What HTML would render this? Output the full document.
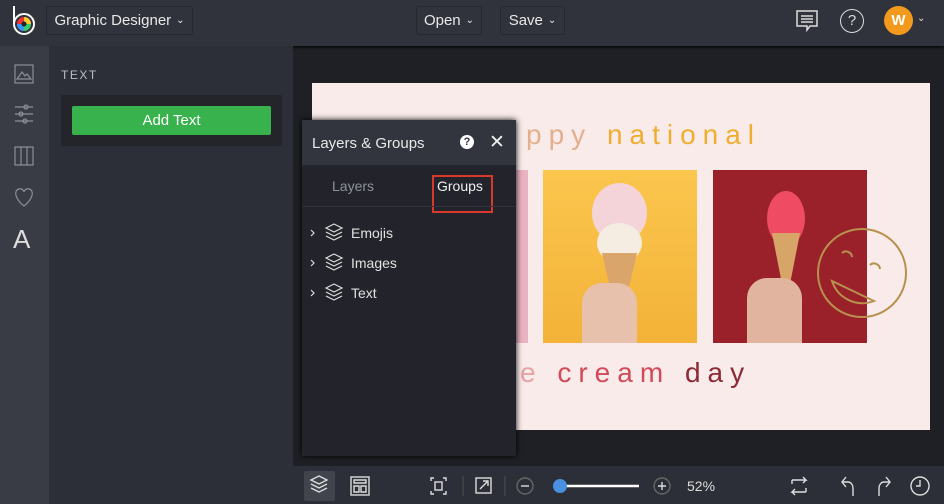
<!DOCTYPE html>
<html><head><style>
*{margin:0;padding:0;box-sizing:border-box}
body{width:944px;height:504px;overflow:hidden;background:#1e2025;font-family:"Liberation Sans",sans-serif;position:relative;color:#e6e6e6}
.abs{position:absolute}
.btn{position:absolute;border:1px solid #262830;border-radius:3px;font-size:15px;color:#e8e8e8;display:flex;align-items:center;justify-content:center}
</style></head><body>
<!-- top bar -->
<div class="abs" style="left:0;top:0;width:944px;height:46px;background:#30333b;box-shadow:0 1px 3px #000"></div>
<svg class="abs" style="left:10px;top:4px" width="28" height="32" viewBox="0 0 28 32">
<circle cx="14" cy="20" r="10" fill="none" stroke="#fff" stroke-width="2"/>
<line x1="4" y1="2" x2="4" y2="20" stroke="#fff" stroke-width="2"/>
<circle cx="14" cy="20" r="7" fill="#e33"/>
<path d="M14 20 L14 13 A7 7 0 0 1 21 20Z" fill="#fc3"/>
<path d="M14 20 L21 20 A7 7 0 0 1 14 27Z" fill="#3c6"/>
<path d="M14 20 L14 27 A7 7 0 0 1 7 20Z" fill="#39f"/>
<circle cx="14" cy="20" r="2.5" fill="#222"/>
</svg>
<div class="btn" style="left:46px;top:6px;width:147px;height:29px">Graphic Designer <span style="font-size:10px;margin-left:5px">&#8964;</span></div>
<div class="btn" style="left:416px;top:6px;width:66px;height:29px">Open <span style="font-size:10px;margin-left:5px">&#8964;</span></div>
<div class="btn" style="left:500px;top:6px;width:65px;height:29px">Save <span style="font-size:10px;margin-left:5px">&#8964;</span></div>
<svg class="abs" style="left:795px;top:9px" width="24" height="24" viewBox="0 0 24 24" fill="none" stroke="#ddd" stroke-width="1.5"><path d="M2 2h20v15H15l-3 4v-4H2z"/><path d="M6 7h12M6 10h12M6 13h12"/></svg>
<div class="abs" style="left:840px;top:9px;width:24px;height:24px;border:1.5px solid #ddd;border-radius:50%;font-size:15px;text-align:center;line-height:21px;color:#ddd">?</div>
<div class="abs" style="left:884px;top:6px;width:29px;height:29px;border-radius:50%;background:#f39a1e;color:#fff;font-weight:bold;font-size:15px;text-align:center;line-height:29px">W</div>
<div class="abs" style="left:917px;top:13px;font-size:10px;color:#ddd">&#8964;</div>
<!-- left rail -->
<div class="abs" style="left:0;top:46px;width:49px;height:458px;background:#393c45"></div>
<svg class="abs" style="left:13px;top:63px" width="22" height="200" viewBox="0 0 22 200" fill="none" stroke="#8a8e98" stroke-width="1.2">
<rect x="2" y="2" width="18" height="18"/><path d="M4 16l5-7 3 4 2-2 4 5z"/>
<path d="M2 44h18M2 51h18M2 58h18"/><circle cx="13" cy="44" r="2"/><circle cx="8" cy="51" r="2"/><circle cx="12" cy="58" r="2"/>
<rect x="2" y="84" width="18" height="18"/><path d="M8 84v18M14 84v18"/>
<path d="M11 143 C1 135 1 127 6 126 C9 125 11 128 11 129 C11 128 13 125 16 126 C21 127 21 135 11 143z"/>
</svg>
<div class="abs" style="left:13px;top:224px;font-size:26px;color:#ddd;font-weight:300">A</div>
<!-- side panel -->
<div class="abs" style="left:49px;top:46px;width:244px;height:458px;background:#2c2f37"></div>
<div class="abs" style="left:61px;top:68px;font-size:12px;letter-spacing:1.5px;color:#b8bcc4">TEXT</div>
<div class="abs" style="left:61px;top:95px;width:221px;height:51px;background:#23252b"></div>
<div class="abs" style="left:72px;top:106px;width:199px;height:29px;background:#37b24d;border-radius:2px;color:#fff;font-size:15px;text-align:center;line-height:29px">Add Text</div>
<!-- canvas -->
<div class="abs" style="left:312px;top:83px;width:618px;height:347px;background:#f9ebea;overflow:hidden">
<div class="abs" style="left:204px;top:87px;width:12px;height:173px;background:#eab3c4"></div>
<div class="abs" style="left:231px;top:87px;width:154px;height:173px;background:linear-gradient(#fbc64e,#f3b238)"></div>
<div class="abs" style="left:280px;top:100px;width:55px;height:60px;border-radius:50%;background:#f4d4d8"></div>
<div class="abs" style="left:285px;top:140px;width:45px;height:40px;border-radius:50%;background:#f5ece2"></div>
<div class="abs" style="left:290px;top:170px;width:35px;height:60px;background:#d9a56b;clip-path:polygon(0 0,100% 0,60% 100%,40% 100%)"></div>
<div class="abs" style="left:270px;top:200px;width:55px;height:60px;border-radius:20px 20px 0 0;background:#e8c1ad"></div>
<div class="abs" style="left:401px;top:87px;width:154px;height:173px;background:#9a2129"></div>
<div class="abs" style="left:455px;top:108px;width:38px;height:55px;border-radius:50%;background:#ef4c63"></div>
<div class="abs" style="left:460px;top:150px;width:28px;height:50px;background:#d7a567;clip-path:polygon(0 0,100% 0,65% 100%,35% 100%)"></div>
<div class="abs" style="left:435px;top:195px;width:55px;height:65px;border-radius:20px 20px 0 0;background:#e1b49f"></div>
<svg class="abs" style="left:500px;top:140px" width="100" height="100" viewBox="0 0 100 100" fill="none" stroke="#b7924e" stroke-width="2"><circle cx="50" cy="50" r="44"/><path d="M20 58 A32 32 0 0 0 62 78 Z"/><path d="M30 30a6 6 0 0 1 10 4M58 42a6 6 0 0 1 10 4"/></svg>
<div class="abs" style="left:214px;top:36px;font-size:28px;letter-spacing:7px;color:#e2b08d">ppy <span style="color:#efae2e">national</span></div>
<div class="abs" style="left:208px;top:274px;font-size:28px;letter-spacing:7px;color:#e8a3a3">e <span style="color:#d24a59">cream</span> <span style="color:#8c2a36">day</span></div>
</div>
<!-- layers panel -->
<div class="abs" style="left:302px;top:120px;width:214px;height:336px;background:#23242b;box-shadow:0 0 6px #000"></div>
<div class="abs" style="left:302px;top:120px;width:214px;height:45px;background:#32353d"></div>
<div class="abs" style="left:312px;top:135px;font-size:15px;color:#e8e8e8">Layers &amp; Groups</div>
<div class="abs" style="left:460px;top:135px;width:14px;height:14px;border-radius:50%;background:#fff;color:#32353d;font-size:11px;font-weight:bold;text-align:center;line-height:14px">?</div>
<div class="abs" style="left:489px;top:131px;font-size:19px;color:#eee">&#10005;</div>
<div class="abs" style="left:332px;top:178px;font-size:14px;color:#8e929a">Layers</div>
<div class="abs" style="left:437px;top:178px;font-size:14px;color:#eee">Groups</div>
<div class="abs" style="left:437px;top:206px;width:48px;height:1px;background:#ddd"></div>
<div class="abs" style="left:432px;top:175px;width:61px;height:38px;border:2px solid #d9392d"></div>
<div class="abs" style="left:302px;top:206px;width:214px;height:1px;background:#31333a"></div>
<svg class="abs" style="left:308px;top:222px" width="40" height="84" viewBox="0 0 40 84" fill="none" stroke="#ddd" stroke-width="1.2">
<path d="M3 8l3 3-3 3M3 38l3 3-3 3M3 68l3 3-3 3"/>
<g><path d="M18 6l8-4 8 4-8 4z"/><path d="M18 10l8 4 8-4M18 14l8 4 8-4"/></g>
<g transform="translate(0,30)"><path d="M18 6l8-4 8 4-8 4z"/><path d="M18 10l8 4 8-4M18 14l8 4 8-4"/></g>
<g transform="translate(0,60)"><path d="M18 6l8-4 8 4-8 4z"/><path d="M18 10l8 4 8-4M18 14l8 4 8-4"/></g>
</svg>
<div class="abs" style="left:351px;top:225px;font-size:14px;color:#e0e0e0">Emojis</div>
<div class="abs" style="left:351px;top:255px;font-size:14px;color:#e0e0e0">Images</div>
<div class="abs" style="left:351px;top:285px;font-size:14px;color:#e0e0e0">Text</div>
<!-- bottom bar -->
<div class="abs" style="left:293px;top:466px;width:651px;height:38px;background:#2c2f37"></div>
<div class="abs" style="left:304px;top:471px;width:31px;height:30px;background:#41444d;border-radius:2px"></div>
<svg class="abs" style="left:300px;top:472px" width="644" height="30" viewBox="0 0 644 30" fill="none" stroke="#ddd" stroke-width="1.4">
<path d="M11 8l8-4 8 4-8 4zM11 12l8 4 8-4M11 16l8 4 8-4"/>
<rect x="51" y="5" width="18" height="18"/><path d="M54 8h12v3H54zM54 14h5v6h-5zM61 14h5v6h-5z"/>
<path d="M134 6h-3v3M143 6h3v3M134 22h-3v-3M143 22h3v-3"/><rect x="135" y="10" width="7" height="8"/>
<line x1="163" y1="4" x2="163" y2="24" stroke="#444"/>
<rect x="176" y="6" width="15" height="15"/><path d="M180 17l8-8M183 9h5v5"/>
<line x1="205" y1="4" x2="205" y2="24" stroke="#444"/>
<circle cx="225" cy="14" r="8" stroke="#666"/><path d="M221 14h8"/>
<line x1="260" y1="14" x2="339" y2="14" stroke="#fff" stroke-width="2.5"/>
<circle cx="362" cy="14" r="8" stroke="#666"/><path d="M358 14h8M362 10v8"/>
<path d="M492 8h14l-3-3M506 8l-3 3M506 20h-14l3-3M492 20l3 3M492 8v4M506 20v-4"/>
<path d="M546 12l-4-5 4-5M542 7h6c3 0 5 3 5 6v8" transform="translate(0,3)"/>
<path d="M586 12l4-5-4-5M590 7h-6c-3 0-5 3-5 6v8" transform="translate(0,3)"/>
<circle cx="620" cy="14" r="9"/><path d="M620 8v6h-4"/>
</svg>
<div class="abs" style="left:553px;top:479px;width:14px;height:14px;border-radius:50%;background:#4a8fe0"></div>
<div class="abs" style="left:687px;top:478px;font-size:14px;color:#ddd">52%</div>
</body></html>
